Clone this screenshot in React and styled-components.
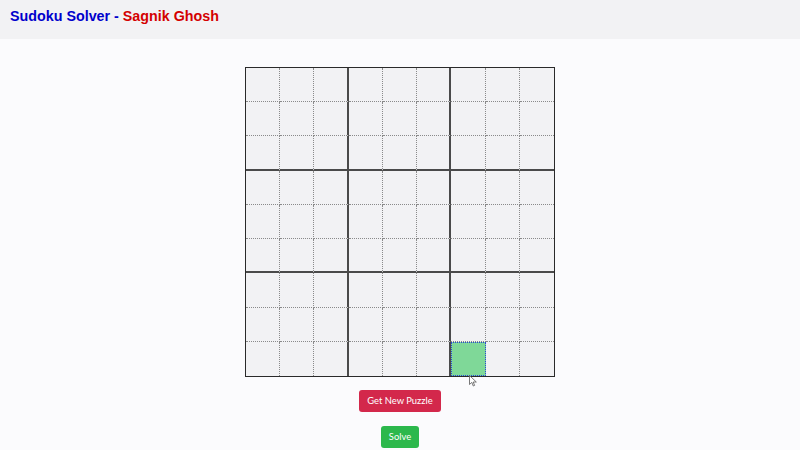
import React from "react";
import styled, { createGlobalStyle } from "styled-components";

const Global = createGlobalStyle`
  html, body { margin: 0; padding: 0; background: #fbfbfd; }
  body { font-family: "Liberation Sans", Arial, sans-serif; }
`;

const Header = styled.header`
  height: 39px;
  background: #f2f2f4;
  box-sizing: border-box;
  padding: 7px 10px 0;
`;

const Title = styled.h1`
  margin: 0;
  font-size: 14.3px;
  font-weight: bold;
  color: #0000cc;
  line-height: 18px;
`;

const Name = styled.span`
  color: #d40000;
`;

const Main = styled.main`
  display: flex;
  flex-direction: column;
  align-items: center;
  padding-top: 28px;
`;

const Board = styled.div`
  position: relative;
  display: grid;
  grid-template-columns: repeat(9, 1fr);
  grid-template-rows: repeat(9, 1fr);
  width: 310px;
  height: 310px;
  box-sizing: border-box;
  border: 1.5px solid #2a2a2a;
  background: #f2f2f4;
`;

const Cell = styled.div`
  box-sizing: border-box;
  border-right: ${(p) => (p.$thickR ? "2px solid #4a4a4a" : p.$last ? "none" : "1px dotted #8a8a8a")};
  border-bottom: ${(p) => (p.$thickB ? "2px solid #4a4a4a" : p.$lastRow ? "none" : "1px dotted #8a8a8a")};
  background: ${(p) => (p.$active ? "#7fd898" : "transparent")};
  outline: ${(p) => (p.$active ? "1px dotted #2a45d8" : "none")};
  outline-offset: -1px;
`;

const Pointer = styled.svg`
  position: absolute;
  left: 223px;
  top: 307px;
`;

const Buttons = styled.div`
  display: flex;
  flex-direction: column;
  align-items: center;
  gap: 14px;
  margin-top: 13px;
`;

const Button = styled.button`
  font-family: Lato, "Open Sans", sans-serif;
  font-size: 9.4px;
  color: #fff;
  background: ${(p) => p.$bg};
  border: none;
  border-radius: 3px;
  height: 22px;
  padding: 0 8px;
  line-height: 22px;
`;

export default function App() {
  const cells = [];
  for (let r = 0; r < 9; r++) {
    for (let c = 0; c < 9; c++) {
      cells.push(
        <Cell
          key={`${r}-${c}`}
          $thickR={c === 2 || c === 5}
          $last={c === 8}
          $thickB={r === 2 || r === 5}
          $lastRow={r === 8}
          $active={r === 8 && c === 6}
        />
      );
    }
  }
  return (
    <>
      <Global />
      <Header>
        <Title>
          Sudoku Solver - <Name>Sagnik Ghosh</Name>
        </Title>
      </Header>
      <Main>
        <Board>
          {cells}
          <Pointer width="8" height="12" viewBox="0 0 8 12">
            <path d="M0.5 0.5 L0.5 9.5 L2.8 7.4 L4.3 11 L5.6 10.4 L4.2 7 L7.3 7 Z" fill="#fff" stroke="#555" strokeWidth="0.8" />
          </Pointer>
        </Board>
        <Buttons>
          <Button $bg="#d3284b">Get New Puzzle</Button>
          <Button $bg="#2cb84c">Solve</Button>
        </Buttons>
      </Main>
    </>
  );
}
